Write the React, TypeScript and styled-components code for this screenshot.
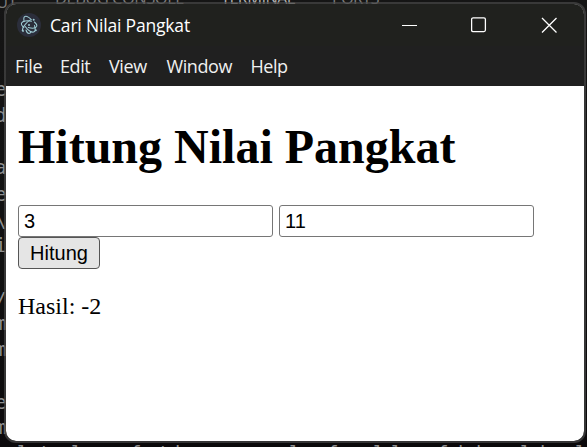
import React, { useState } from "react";
import styled, { createGlobalStyle } from "styled-components";

const GlobalStyle = createGlobalStyle`
  html, body { margin: 0; height: 100%; background: #121212; overflow: hidden; }
`;

const Desktop = styled.div`
  position: relative;
  box-sizing: border-box;
  width: 587px;
  height: 447px;
  padding: 2px 1px 4px 4px;
  overflow: hidden;
  background: linear-gradient(#151515, #101010 60%, #0b090b);
`;

const TabLabel = styled.span<{ $x: number; $y?: number; $spacing: number; $active?: boolean }>`
  position: absolute;
  left: ${(p) => p.$x}px;
  top: ${(p) => p.$y ?? -12}px;
  font: 16.5px/20px "Open Sans", sans-serif;
  letter-spacing: ${(p) => p.$spacing}px;
  white-space: nowrap;
  color: ${(p) => (p.$active ? "#b0b0b0" : "#7c7c7c")};
`;

const Glyph = styled.span<{ $x: number; $y: number }>`
  position: absolute;
  left: ${(p) => p.$x}px;
  top: ${(p) => p.$y}px;
  font: 19px/20px "DejaVu Sans Mono", monospace;
  white-space: pre;
  color: #8f8f8f;
`;

const Window = styled.main`
  position: relative;
  box-sizing: border-box;
  display: flex;
  flex-direction: column;
  width: 582px;
  height: 441px;
  border: 2px solid rgba(72, 72, 72, 0.7);
  border-radius: 12px;
  overflow: hidden;
  background: #fff;
  background-clip: padding-box;
`;

const TitleBar = styled.header`
  display: flex;
  flex: none;
  align-items: center;
  height: 42px;
  padding-left: 11px;
  background: #20211e;
`;

const Title = styled.span`
  flex: 1;
  margin-left: 9px;
  font: 17.5px/24px "Open Sans", sans-serif;
  letter-spacing: -0.18px;
  color: #fff;
`;

const Controls = styled.div`
  display: flex;
  width: 210px;
  height: 100%;
`;

const ControlButton = styled.button`
  flex: 1;
  display: flex;
  align-items: center;
  justify-content: center;
  padding: 0;
  border: 0;
  background: none;
`;

const MenuBar = styled.nav`
  display: flex;
  flex: none;
  height: 40px;
  padding-left: 9px;
  background: #202020;
`;

const MenuItem = styled.span<{ $w: number; $spacing: number }>`
  width: ${(p) => p.$w}px;
  font: 18px/41px "Open Sans", sans-serif;
  letter-spacing: ${(p) => p.$spacing}px;
  white-space: nowrap;
  color: #f0f0f0;
`;

const Page = styled.section`
  padding: 0 12px;
  font: 24px/27px "Liberation Serif", serif;
  color: #000;
`;

const Heading = styled.h1`
  margin: 33px 0 31px;
  font-size: 48px;
  line-height: 55px;
  font-weight: bold;
  white-space: nowrap;
`;

const Fields = styled.div`
  display: flex;
  gap: 6px;
`;

const NumberField = styled.input`
  box-sizing: border-box;
  width: 255px;
  height: 32px;
  padding: 1px 5px;
  border: 1px solid #767676;
  border-radius: 3px;
  background: #fff;
  color: #000;
  font: 20px "Liberation Sans", sans-serif;
  outline: none;
`;

const SubmitButton = styled.button`
  display: block;
  box-sizing: border-box;
  width: 82px;
  height: 32px;
  padding: 0;
  border: 1px solid #555;
  border-radius: 4px;
  background: #e5e5e5;
  color: #000;
  font: 20px "Liberation Sans", sans-serif;
`;

const Result = styled.p`
  margin: 24px 0;
`;

const codeEdge: [string, number][] = [
  ["e", 79], ["d", 105], ["a", 157], ["e", 184], ["\\", 210], ["i", 235],
  ["/", 289], ["m", 313], ["m", 339], ["e", 392], ["m", 417],
];

const lowerCode: [string, number][] = [
  ["l", 17], ["t", 39], ["l", 71], ["f", 130], ["t", 158], ["h", 175],
  ["l", 289], ["f", 327], ["l", 373], ["l", 391], ["f", 437], ["h", 458],
  ["h", 476], ["l", 520], ["h", 540], ["l", 575],
];

const menus: [string, number, number][] = [
  ["File", 45, -0.3], ["Edit", 49, -0.4], ["View", 57.5, -0.4],
  ["Window", 84, -0.4], ["Help", 50, -0.5],
];

function ElectronIcon() {
  return (
    <svg width="24" height="24" viewBox="0 0 24 24" fill="none">
      <circle cx="12" cy="12" r="12" fill="#2b2e3b" />
      <g stroke="#9fcdd5" strokeWidth="1.05" strokeLinecap="round">
        <path d="M14.5 8.2C10 7.2 5.6 8.2 4.6 10c-.6 1.2.4 2.9 2.3 4.5" />
        <path d="M17.4 9c2 1.7 2.8 3.4 2.2 4.6-.8 1.5-4.4 1.9-8.3 1" />
        <path d="M8.2 13.5c3 4.3 7.1 6.4 8.9 5.3 1.3-.7 1.3-3.2.4-6.2" />
        <path d="M9 17c.7 2.1 1.7 3.5 3 3.5.9 0 1.6-.6 2.2-1.7" />
        <path d="M7.1 8.3c-.5-2.5-.3-4.3.7-4.8 1.4-.8 4 .6 6.5 3.1" />
        <path d="M6.2 18.4c-1.2-1.2-.3-4.2 2.1-7.1 1.5-1.9 3.4-3.5 5.1-4.4" />
      </g>
      <g fill="#9fcdd5">
        <circle cx="12" cy="12.1" r="1" />
        <circle cx="16.7" cy="6.7" r="1" />
        <circle cx="5.7" cy="17.6" r="1" />
        <circle cx="18.8" cy="17.2" r="1" />
      </g>
    </svg>
  );
}

export default function App() {
  const [base, setBase] = useState("3");
  const [exponent, setExponent] = useState("11");
  const [result, setResult] = useState(-2);

  return (
    <Desktop>
      <GlobalStyle />
      <TabLabel $x={-4} $y={-8} $spacing={0}>UT</TabLabel>
      <TabLabel $x={55} $spacing={-0.5}>DEBUG CONSOLE</TabLabel>
      <TabLabel $x={221} $spacing={-0.7} $active>TERMINAL</TabLabel>
      <TabLabel $x={332} $spacing={-0.9}>PORTS</TabLabel>
      {codeEdge.map(([glyph, y]) => (
        <Glyph key={y} $x={-5} $y={y}>{glyph}</Glyph>
      ))}
      {lowerCode.map(([glyph, x]) => (
        <Glyph key={x} $x={x} $y={443}>{glyph}</Glyph>
      ))}
      <Window>
        <TitleBar>
          <ElectronIcon />
          <Title>Cari Nilai Pangkat</Title>
          <Controls>
            <ControlButton aria-label="Minimize">
              <svg width="16" height="16"><path d="M1 8.5h15" stroke="#fff" /></svg>
            </ControlButton>
            <ControlButton aria-label="Maximize">
              <svg width="16" height="16" fill="none" stroke="#fff">
                <rect x="0.6" y="0.8" width="13.8" height="13.8" rx="1.5" strokeWidth="1.3" />
              </svg>
            </ControlButton>
            <ControlButton aria-label="Close">
              <svg width="16" height="16" stroke="#fff" strokeWidth="1.3">
                <path d="M1 1l14.5 14.5M15.5 1L1 15.5" />
              </svg>
            </ControlButton>
          </Controls>
        </TitleBar>
        <MenuBar>
          {menus.map(([label, width, spacing]) => (
            <MenuItem key={label} $w={width} $spacing={spacing}>{label}</MenuItem>
          ))}
        </MenuBar>
        <Page>
          <Heading>Hitung Nilai Pangkat</Heading>
          <Fields>
            <NumberField value={base} onChange={(e) => setBase(e.target.value)} />
            <NumberField value={exponent} onChange={(e) => setExponent(e.target.value)} />
          </Fields>
          <SubmitButton onClick={() => setResult(Number(base) ** Number(exponent))}>
            Hitung
          </SubmitButton>
          <Result>Hasil: {result}</Result>
        </Page>
      </Window>
    </Desktop>
  );
}
